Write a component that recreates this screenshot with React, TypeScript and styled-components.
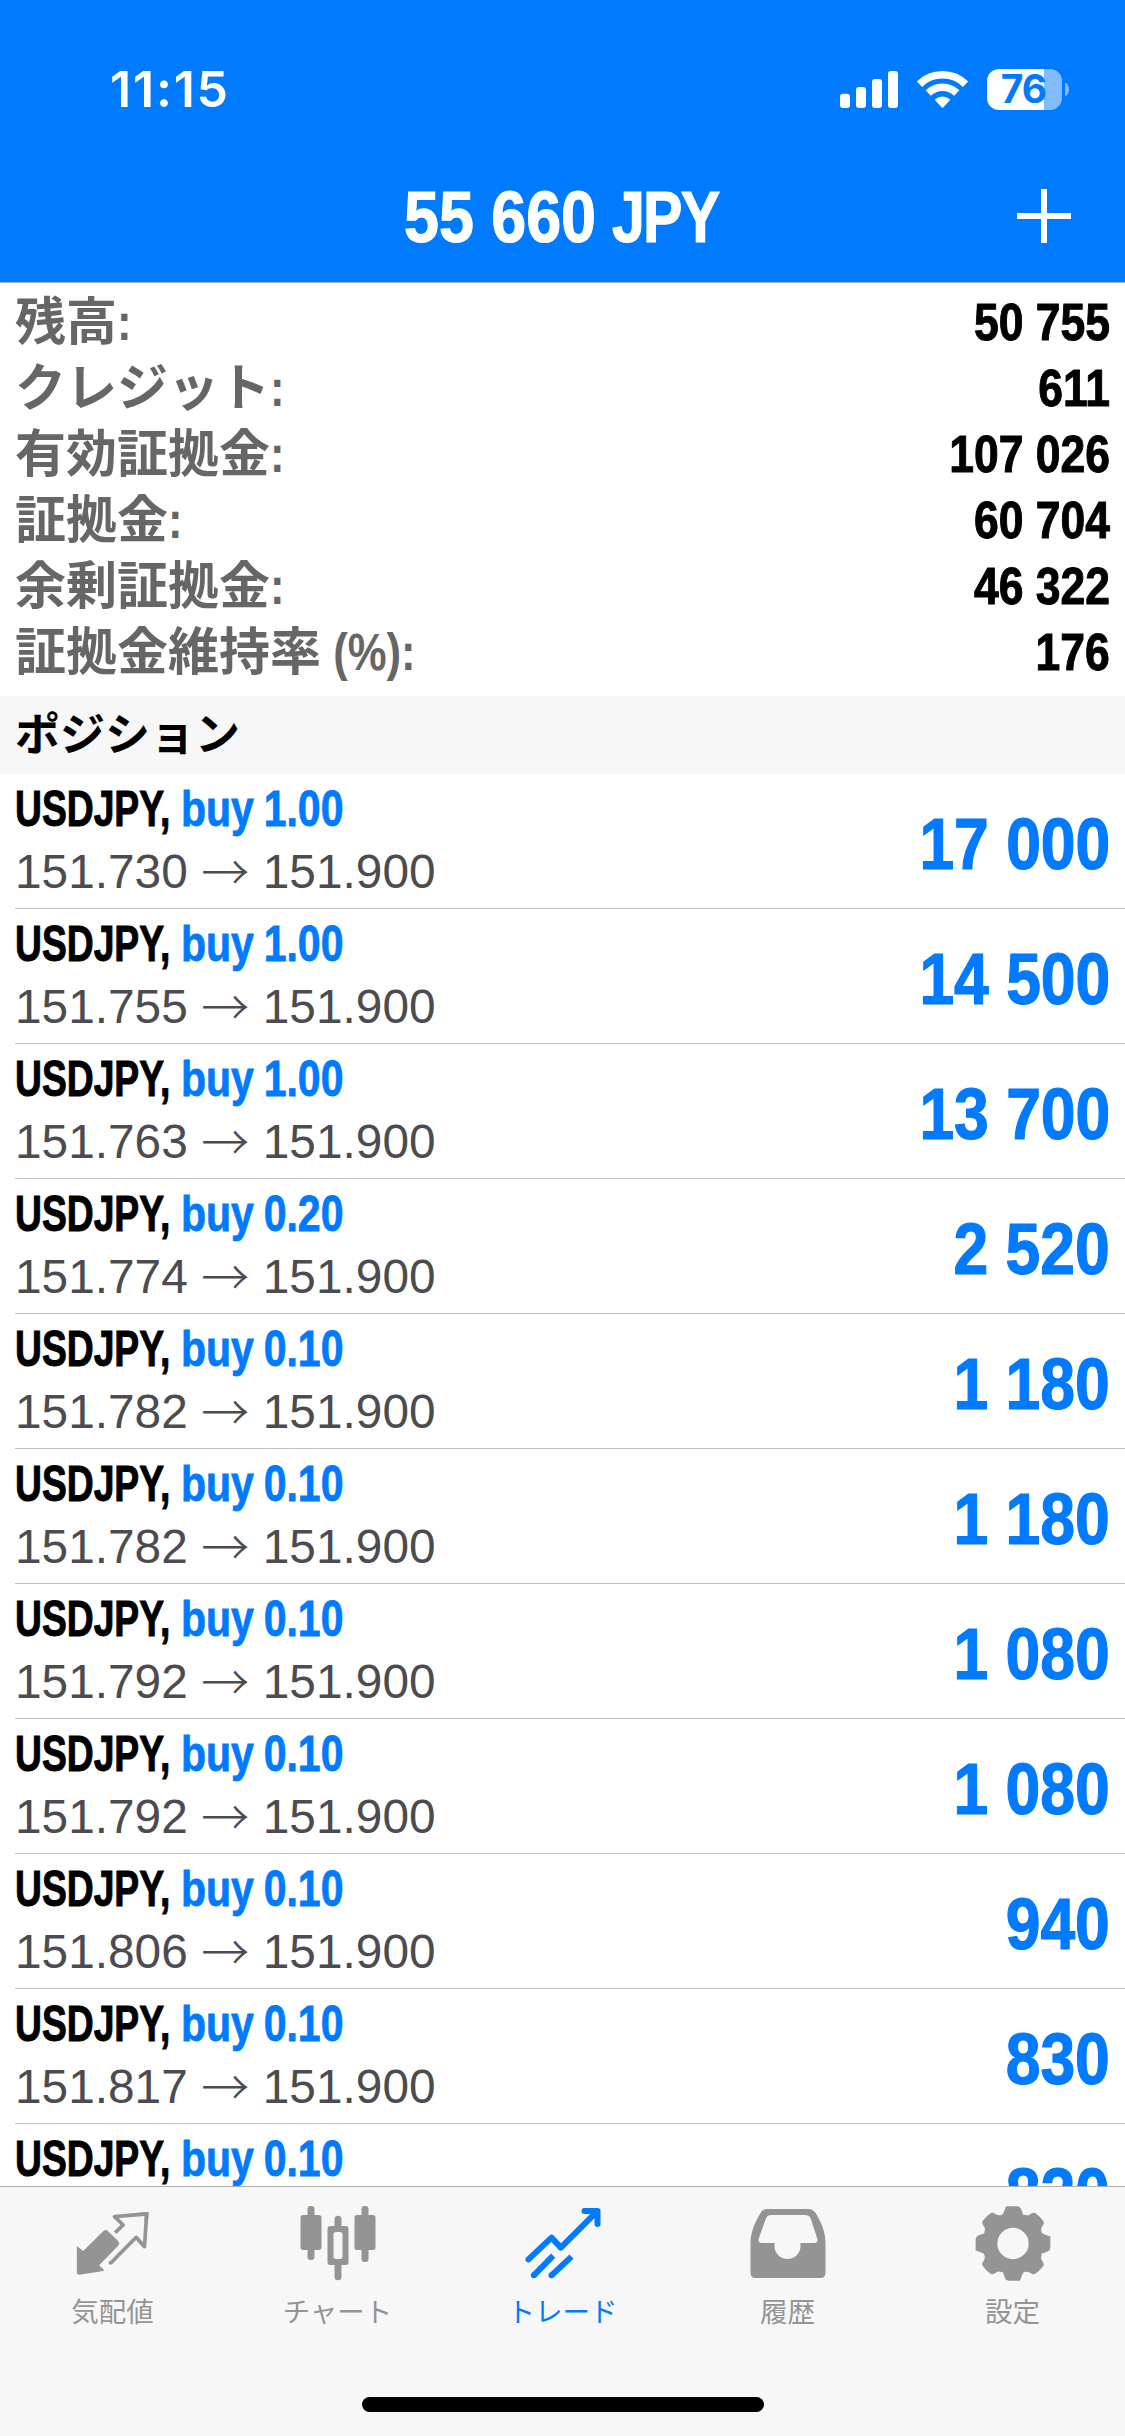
import React from "react";
import styled, { createGlobalStyle } from "styled-components";

const BLUE = "#007aff";
const GREY = "#949494";
const LATIN = `"Liberation Sans", Arial, "Noto Sans CJK JP", sans-serif`;
const JAPANESE = `"Noto Sans CJK JP", "Liberation Sans", sans-serif`;
const SYSTEM = `Inter, "Liberation Sans", "Noto Sans CJK JP", sans-serif`;

const GlobalStyle = createGlobalStyle`
  *, *::before, *::after { box-sizing: border-box; }
  html, body { margin: 0; padding: 0; background: #fff; }
`;

const Screen = styled.div`
  display: flex;
  flex-direction: column;
  width: 1125px;
  height: 2436px;
  overflow: hidden;
  background: #fff;
  font-family: ${LATIN};
`;

const Header = styled.header`
  flex: none;
  height: 283px;
  background: ${BLUE};
  border-bottom: 1px solid #a9b0b8;
  color: #fff;
`;

const StatusBar = styled.div`
  display: flex;
  align-items: center;
  justify-content: space-between;
  height: 150px;
  padding: 45px 56px 17px 110px;
`;

const Clock = styled.time`
  font: 600 50px/60px ${SYSTEM};
  letter-spacing: 1.8px;
`;

const StatusIcons = styled.div`
  display: flex;
  align-items: center;
`;

const SignalIcon = styled.svg`
  display: block;
  width: 58px;
  height: 41px;
  margin-right: 18px;
`;

const WifiIcon = styled.svg`
  display: block;
  width: 53px;
  height: 41px;
  margin-right: 18px;
`;

const Battery = styled.div`
  display: flex;
  align-items: center;
  gap: 3px;
`;

const BatteryBody = styled.div`
  width: 75px;
  height: 41px;
  padding-right: 2px;
  border-radius: 12px;
  background: linear-gradient(to right, #fff 57px, rgba(255, 255, 255, 0.5) 57px);
  color: ${BLUE};
  font: 700 39px/40px ${SYSTEM};
  letter-spacing: -1px;
  text-align: center;
`;

const BatteryNub = styled.div`
  width: 4px;
  height: 13px;
  border-radius: 0 4px 4px 0 / 0 6.5px 6.5px 0;
  background: rgba(255, 255, 255, 0.5);
`;

const NavBar = styled.div`
  display: grid;
  grid-template-columns: 1fr auto 1fr;
  align-items: center;
  height: 132px;
  padding-right: 54px;
  padding-left: 54px;
`;

const Title = styled.h1`
  display: flex;
  grid-column: 2;
  width: 318px;
  margin: 0;
  padding-top: 2px;
  font: 700 73px/84px ${LATIN};
  white-space: nowrap;
`;

const AddButton = styled.button`
  justify-self: end;
  width: 54px;
  height: 54px;
  padding: 0;
  border: 0;
  background: none;
  color: inherit;

  svg {
    display: block;
  }
`;

const Squeezed = styled.span<{
  $scale: number;
  $width?: number;
  $from?: string;
  $tracking?: number;
  $weight?: number;
}>`
  display: inline-block;
  flex: none;
  width: ${(p) => (p.$width ? `${p.$width}px` : "auto")};
  letter-spacing: ${(p) => p.$tracking ?? 0}px;
  white-space: pre;
  -webkit-text-stroke: ${(p) => p.$weight ?? 0}px currentColor;
  transform: scaleX(${(p) => p.$scale});
  transform-origin: ${(p) => p.$from ?? "left"} center;
`;

const Summary = styled.dl`
  flex: none;
  height: 413px;
  margin: 0;
  padding: 6px 15px 0;
`;

const SummaryRow = styled.div`
  display: flex;
  align-items: flex-start;
  justify-content: space-between;
  height: 66px;
`;

const SummaryLabel = styled.dt`
  display: flex;
  align-items: baseline;
  color: #666;
  font: 700 51px/58px ${JAPANESE};
`;

const LabelTail = styled(Squeezed)`
  font: 700 52px/58px ${LATIN};
`;

const SummaryValue = styled.dd`
  margin: 0;
  color: #000;
  font: 700 52px/66px ${LATIN};
`;

const SectionTitle = styled.h2`
  flex: none;
  height: 78px;
  margin: 0;
  padding: 0 15px;
  background: #f7f7f7;
  color: #000;
  font: 700 45px/72px ${JAPANESE};
`;

const Positions = styled.ul`
  flex: 1;
  min-height: 0;
  margin: 0;
  padding: 0 0 0 15px;
  overflow: hidden;
  list-style: none;
`;

const PositionRow = styled.li`
  display: flex;
  justify-content: space-between;
  height: 135px;
  padding: 4px 15px 0 0;
  border-bottom: 1px solid #c3c3c5;
`;

const Deal = styled.div`
  display: flex;
  flex-direction: column;
  gap: 3px;
  padding-top: 1px;
`;

const DealHead = styled.div`
  display: flex;
  height: 60px;
  color: #000;
  font: 700 50px/60px ${LATIN};
`;

const Side = styled(Squeezed)`
  color: ${BLUE};
  word-spacing: -2px;
`;

const Prices = styled.div`
  display: flex;
  gap: 13.5px;
  height: 60px;
  color: #4b4b50;
  font: 400 47.8px/60px ${LATIN};
`;

const Arrow = styled.span`
  width: 48px;
  font: 300 48px/54px ${JAPANESE};
`;

const Profit = styled.div`
  color: ${BLUE};
  font: 700 73px/131px ${LATIN};
`;

const TabBar = styled.nav`
  flex: none;
  height: 250px;
  border-top: 1px solid #adadad;
  background: #f7f7f7;
`;

const Tabs = styled.div`
  display: grid;
  grid-template-columns: repeat(5, 1fr);
  height: 210px;
`;

const Tab = styled.a<{ $active?: boolean }>`
  display: flex;
  flex-direction: column;
  align-items: center;
  gap: 9px;
  padding-top: 16px;
  color: ${(p) => (p.$active ? BLUE : GREY)};

  svg {
    display: block;
    width: 80px;
    height: 80px;
  }
`;

const TabLabel = styled.span`
  font: 400 27.5px/36px ${JAPANESE};
`;

const HomeIndicator = styled.div`
  width: 402px;
  height: 15px;
  margin: 0 auto;
  border-radius: 7.5px;
  background: #000;
`;

const summary = [
  { label: "残高", tail: ":", value: "50 755" },
  { label: "クレジット", tail: ":", value: "611" },
  { label: "有効証拠金", tail: ":", value: "107 026" },
  { label: "証拠金", tail: ":", value: "60 704" },
  { label: "余剰証拠金", tail: ":", value: "46 322" },
  { label: "証拠金維持率", tail: " (%):", value: "176" },
];

const positions = [
  { lot: "1.00", open: "151.730", profit: "17 000" },
  { lot: "1.00", open: "151.755", profit: "14 500" },
  { lot: "1.00", open: "151.763", profit: "13 700" },
  { lot: "0.20", open: "151.774", profit: "2 520" },
  { lot: "0.10", open: "151.782", profit: "1 180" },
  { lot: "0.10", open: "151.782", profit: "1 180" },
  { lot: "0.10", open: "151.792", profit: "1 080" },
  { lot: "0.10", open: "151.792", profit: "1 080" },
  { lot: "0.10", open: "151.806", profit: "940" },
  { lot: "0.10", open: "151.817", profit: "830" },
  { lot: "0.10", open: "", profit: "820" },
];

const QuotesIcon = () => (
  <svg viewBox="67.5 39 240 240" fill="none" stroke="currentColor">
    <path
      fill="currentColor"
      stroke="none"
      d="M79 168L98 183L158 124Q165 117 172 123L203 153Q209 160 203 167L146 226L160 239Q162 242 158 243L87 254.500Q79 255 79 247Z"
    />
    <path strokeWidth="11" strokeLinejoin="round" d="M194 128L218 105L192 80L288.500 71.500L282 170L257 142L180 220" />
    <path strokeWidth="11" d="M265 73.600L288.500 71.500L287 95" />
    <circle cx="179" cy="219" r="5" fill="currentColor" stroke="none" />
  </svg>
);

const ChartIcon = () => (
  <svg viewBox="742.5 39 240 240" fill="currentColor">
    <rect x="771" y="48" width="21" height="162" rx="9" />
    <rect x="750" y="75" width="63" height="105" rx="8" />
    <rect x="933" y="48" width="21" height="168" rx="9" />
    <rect x="912" y="75" width="63" height="105" rx="8" />
    <path d="M852 112V88a10.500 10.500 0 0 1 21 0V112ZM852 220V260a10.500 10.500 0 0 0 21 0V220Z" />
    <path
      fillRule="evenodd"
      d="M839 108H886a8 8 0 0 1 8 8V217a8 8 0 0 1-8 8H839a8 8 0 0 1-8-8V116a8 8 0 0 1 8-8ZM857 126a8 8 0 0 0-8 8V199a8 8 0 0 0 8 8H868a8 8 0 0 0 8-8V134a8 8 0 0 0-8-8Z"
    />
  </svg>
);

const TradeIcon = () => (
  <svg viewBox="67.5 39 240 240" fill="none" stroke="currentColor" strokeWidth="18">
    <path strokeLinecap="round" strokeLinejoin="round" d="M84 208L153 143L181 173L289 65" />
    <path strokeLinecap="round" strokeLinejoin="round" d="M252 63H291V102" />
    <path d="M100 256L158 197M153 256L213 200" />
    <circle cx="100" cy="256" r="9" fill="currentColor" stroke="none" />
    <circle cx="153" cy="256" r="9" fill="currentColor" stroke="none" />
  </svg>
);

const HistoryIcon = () => (
  <svg viewBox="742.5 39 240 240" fill="currentColor">
    <path
      fillRule="evenodd"
      d="M799 57H925Q936 57 943 66C965 99 975 130 975 160V248Q975 264 959 264H766Q750 264 750 248V160C750 130 761 99 782 66Q788 57 799 57ZM812 75Q801 75 797 84L775 145Q771 159 784 159H822V168A39 39 0 0 0 900 168V159H941Q954 159 950 145L930 84Q926 75 912 75Z"
    />
  </svg>
);

/* One quarter of the gear outline, from the top tooth to the right tooth. */
const gearQuarter: [number, number][] = [
  [13, -112], [21, -112], [24, -104],
  [28, -93], [30, -86], [37, -85],
  [46, -84], [49, -86], [54, -89],
  [62, -94], [68, -91], [72, -87],
  [79, -81], [82, -78], [87, -72],
  [92, -67], [93, -61], [89, -53],
  [86, -48], [84, -45], [85, -37],
  [86, -30], [93, -28], [104, -24],
  [112, -21], [112, -18], [112, -13],
];

const gearPath = (() => {
  const at = (x: number, y: number) => `${187.5 + x} ${160.5 + y}`;
  let path = `M${at(-13, -112)}`;
  let turn = ([x, y]: [number, number]): [number, number] => [x, y];
  for (let quarter = 0; quarter < 4; quarter += 1) {
    const points = gearQuarter.map(turn);
    path += `L${at(...points[0])}`;
    for (let i = 1; i + 1 < points.length; i += 2) {
      path += `Q${at(...points[i])} ${at(...points[i + 1])}`;
    }
    const previous = turn;
    turn = (point) => {
      const [x, y] = previous(point);
      return [-y, x];
    };
  }
  return `${path}ZM140.500 160.500a47 47 0 1 0 94 0a47 47 0 1 0-94 0Z`;
})();

const SettingsIcon = () => (
  <svg viewBox="67.5 39 240 240" fill="currentColor">
    <path fillRule="evenodd" d={gearPath} />
  </svg>
);

const tabs = [
  { label: "気配値", icon: <QuotesIcon /> },
  { label: "チャート", icon: <ChartIcon /> },
  { label: "トレード", icon: <TradeIcon />, active: true },
  { label: "履歴", icon: <HistoryIcon /> },
  { label: "設定", icon: <SettingsIcon /> },
];

export default function App() {
  return (
    <Screen lang="ja">
      <GlobalStyle />
      <Header>
        <StatusBar>
          <Clock>11:15</Clock>
          <StatusIcons>
            <SignalIcon viewBox="0 0 58 41" fill="#fff">
              <rect x="0" y="24.700" width="10" height="14.300" rx="3" />
              <rect x="16" y="18" width="10" height="21" rx="3" />
              <rect x="32" y="10" width="10" height="29" rx="3" />
              <rect x="48" y="2" width="10" height="37" rx="3" />
            </SignalIcon>
            <WifiIcon viewBox="0 0 53 41" fill="none" stroke="#fff">
              <path strokeWidth="7.500" d="M3.500 15.200A33 33 0 0 1 49.500 15.200" />
              <path strokeWidth="7.500" d="M12.200 24A20.500 20.500 0 0 1 40.800 24" />
              <path fill="#fff" stroke="none" d="M19.200 31.300Q18.600 30.600 19.400 30A11 11 0 0 1 33.600 30Q34.400 30.600 33.800 31.300L27.200 38.400Q26.500 39.100 25.800 38.400Z" />
            </WifiIcon>
            <Battery>
              <BatteryBody>76</BatteryBody>
              <BatteryNub />
            </Battery>
          </StatusIcons>
        </StatusBar>
        <NavBar>
          <Title>
            <Squeezed $scale={0.86} $width={208} $weight={1.2}>55 660</Squeezed>
            <Squeezed $scale={0.81} $tracking={-2.2} $weight={1.2}>JPY</Squeezed>
          </Title>
          <AddButton aria-label="add">
            <svg width="54" height="54" viewBox="0 0 54 54" stroke="#fff" strokeWidth="6">
              <path d="M27 0V54M0 27H54" />
            </svg>
          </AddButton>
        </NavBar>
      </Header>

      <Summary>
        {summary.map((row) => (
          <SummaryRow key={row.label}>
            <SummaryLabel>
              {row.label}
              <LabelTail $scale={0.84}>{row.tail}</LabelTail>
            </SummaryLabel>
            <SummaryValue>
              <Squeezed $scale={0.855} $from="right" $weight={1}>{row.value}</Squeezed>
            </SummaryValue>
          </SummaryRow>
        ))}
      </Summary>

      <SectionTitle>ポジション</SectionTitle>
      <Positions>
        {positions.map((position, index) => (
          <PositionRow key={index}>
            <Deal>
              <DealHead>
                <Squeezed $scale={0.745} $width={166} $weight={1}>USDJPY,</Squeezed>
                <Side $scale={0.82} $weight={0.8}>{`buy ${position.lot}`}</Side>
              </DealHead>
              {position.open && (
                <Prices>
                  <span>{position.open}</span>
                  <Arrow>→</Arrow>
                  <span>151.900</span>
                </Prices>
              )}
            </Deal>
            <Profit>
              <Squeezed $scale={0.855} $from="right" $weight={1.2}>{position.profit}</Squeezed>
            </Profit>
          </PositionRow>
        ))}
      </Positions>

      <TabBar>
        <Tabs>
          {tabs.map((tab) => (
            <Tab key={tab.label} $active={tab.active}>
              {tab.icon}
              <TabLabel>{tab.label}</TabLabel>
            </Tab>
          ))}
        </Tabs>
        <HomeIndicator />
      </TabBar>
    </Screen>
  );
}
